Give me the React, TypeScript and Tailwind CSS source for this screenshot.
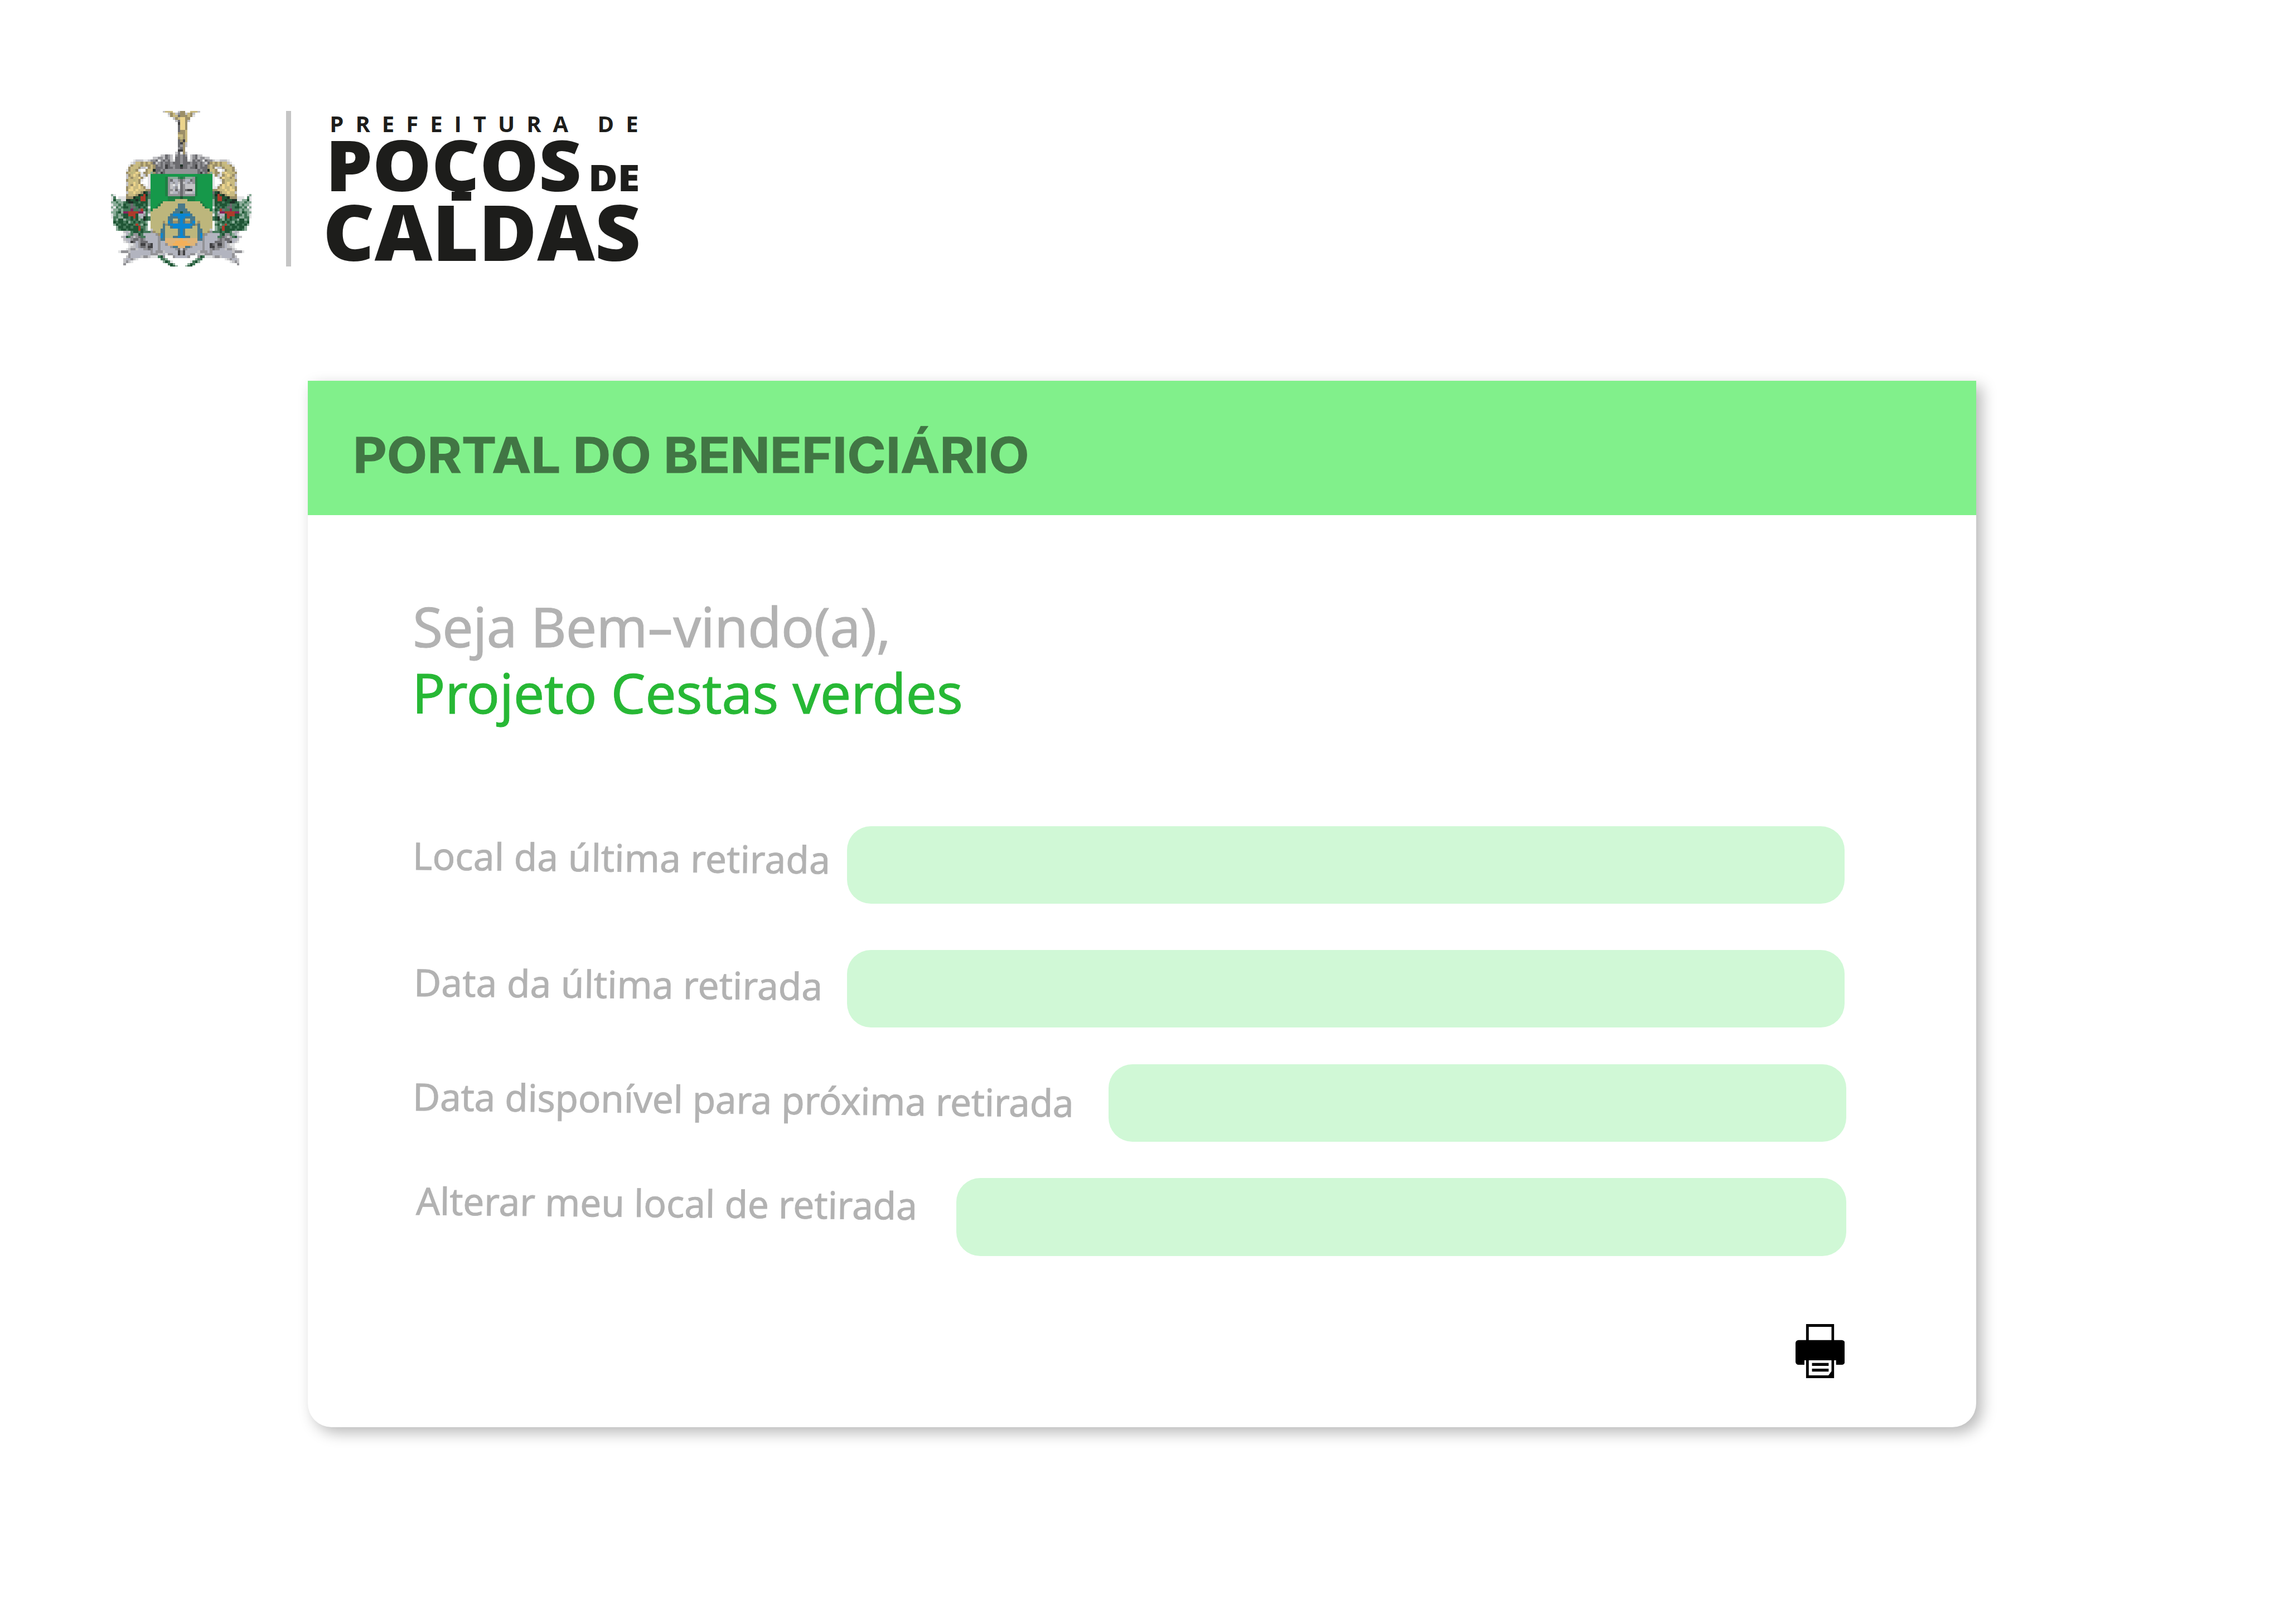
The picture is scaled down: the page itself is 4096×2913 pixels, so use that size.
const PALETTE: Record<string, string> = {
  G: "#16984a", g: "#1f7f44", K: "#bdb67c", B: "#0a86d2", b: "#48788a",
  t: "#c9ba80", T: "#9c8f68", Y: "#ecd48c", D: "#414143", d: "#6c6c70",
  s: "#939397", l: "#c3c3c6", v: "#b2b4bf", x: "#e2e3e4",
  F: "#1f5535", f: "#45795a", m: "#8aac98", n: "#1d3026",
  R: "#ad3b2b", P: "#84265c", O: "#f3b05a", o: "#dfb478",
};

// Left part of the symmetric crest, one character per cell; the right part mirrors it.
const CREST = [
  ".....................lttt..lTT",
  ".......................lTtlsTT",
  ".......................xTttdTTT",
  ".........................lTtYYTT",
  "..........................ldYYTl",
  "...........................DYYT",
  "...........................dYYT",
  "...........................dYYT",
  "...........................dTTt",
  "...........................TTTt",
  "...........................ttTt",
  "...........................TKTt",
  "...........................dTDt",
  "...........................dDTl",
  "...........................dsTl",
  "...........................sdT.",
  "...........................DDT.",
  "..........................ldxTl",
  "....................lldsl.sds",
  ".................llssldsl.dds",
  ".........xlllxxlssdxsdsdlxdds",
  "........xlttTtTtTdlsdsddsddds",
  ".......xTttKTtTTtTdsdsDdssddn",
  ".......TtttTllxTtTdddsDddsddD",
  "......xTtKTx..TttnddsdsssssSs".replace("S", "s"),
  "......TtKtYtxTTtmTdsDdsssssss",
  "......lTtYtTxlTxGGGGGGGGGGGGG",
  "......ltTttYTx.xGGGGGGgsmmmfg",
  "......TttKtTx..xGGGGGGgsdvvsd",
  "......lttYtT...xGGGGGGgsvsvld",
  "......ltTYtYTx.xGGGGGGgslxvxdsllll",
  "......TtYttYtTxxGGGGGGgslvsxdsllll",
  "......TYYtYtttTTGGGGGGgssldvdsdDDl",
  "......lttYttTnFdGGGGGGgslvvsdslllv",
  "mx....TtttTnFRnfGGGGGGgsssssd",
  "xf.xxxTTTnFFRRFfGGGGGGGgggggF",
  "xFmmxxnnFFnFRRFmGGGGGGGgggKKK",
  "mmfmmfFnnFFfFFFmGGGGgKKKKKKKK",
  "xmmfmFffdfFFFfFmGGGgKKKKKKKbb",
  "mxfmfFFfddfFfFfxGGgKKKKKKKKbb",
  "xmmfmfffPffdRfFmgKKKKKKKKKbbb",
  "mmfFmPPRRRRPPvfmKKKKKKKKKbbbF",
  "xmfmfFFRRRFvvsfxKKKKKKKKbBBBB",
  "xffmmFFfFRFmvnFfKKKKKKKbbbbBB",
  ".fmFFmffFfFmfnFfKKKKKKKbbKKbB",
  ".FfFFfFmfFfFffm.KKKKKTKBbTTbB",
  ".mFfFFfFFfRfmFf.KKKKKbTbBBBBB",
  "..mFFfFFfFFRffm.KKKKKbKKbBBBB",
  "..mfFFfFFFFRFfm.lKKKbbKKKKKbB",
  ".....lvlfFFfFfffsTKKbbKKKKKbB",
  ".....xvmfssFfvvvvvsTBbKKKKKbB",
  "....lvFfslsdffvvvvvsBbKKKbbBB",
  ".....lvvsddsdsvvvvvsbbooooooO",
  ".....xlvDdvsdddvvvvsvvooooOOO",
  ".......xxlvsDDsdDvvsvvsooOOOO",
  ".......xllvsddsDDvvsvvvvsbboo",
  "......xlsslvvssdsvvsvvvvvvsdl",
  "...xssslvvvvvvvvsvssslvvvvvDs",
  ".......svvvvvvvvsssllvxssvvDs",
  "......lsvvvvlsslxxxfFs...svvv",
  ".....lvvslx.........ffm......",
  ".....lslx............mFfx....",
  ".....s.................fFm...",
  "........................FFm..",
];

function Crest() {
  return (
    <svg className="h-[279.2px] w-[252.6px] shrink-0" viewBox="0 0.43 57 63.05" preserveAspectRatio="none" shapeRendering="crispEdges">
      {CREST.flatMap((row, y) =>
        Array.from({ length: 57 }, (_, x) => {
          const fill = PALETTE[row[x] ?? row[56 - x]];
          return fill ? <rect key={`${x}-${y}`} x={x} y={y} width={1} height={1} fill={fill} /> : null;
        }),
      )}
    </svg>
  );
}

function Brand() {
  return (
    <div className="flex h-[279.2px] items-start">
      <Crest />
      <div className="ml-[62px] h-full w-[9px] bg-[#c5c5c5]" />
      <div className="ml-[55px] flex flex-col whitespace-nowrap font-['Open_Sans',sans-serif] text-[#1d1d1b]">
        <div className="ml-[14px] text-[40px] leading-[45.6px] font-bold tracking-[21px]">PREFEITURA DE</div>
        <div className="relative ml-[6.5px]">
          <div className="flex items-baseline text-[126px] leading-[100.8px] font-extrabold [clip-path:inset(-10px_-10px_0_-10px)]">
            <span className="w-[471px] origin-left scale-x-[1.055]">POÇOS</span>
            <span className="origin-left scale-x-[1.09] text-[66px] leading-[60px]">DE</span>
          </div>
          <span className="absolute top-[99.5px] left-[226.5px] h-[16px] w-[35px] bg-[#1d1d1b]" />
        </div>
        <div className="ml-[2px] origin-left scale-x-[1.027] text-[139px] leading-[134.9px] font-extrabold">CALDAS</div>
      </div>
    </div>
  );
}

function PrinterIcon() {
  return (
    <svg className="h-[97px] w-[88.4px]" viewBox="0 0 129.5 142">
      <path
        fillRule="evenodd"
        d="M27.7 0H101.3V42H121.5a8 8 0 0 1 8 8V99a8 8 0 0 1-8 8H106.5V95H101.3V142H27.7V95H23.3V107H8a8 8 0 0 1-8-8V50a8 8 0 0 1 8-8H27.7ZM34.8 7.3V42H94.5V7.3ZM34.8 95V134.7H86.5L94.5 123.7V95Z"
      />
      <path d="M43.3 102.3H87v7.7H43.3ZM43.3 117.3H87v7.7H43.3Z" />
    </svg>
  );
}

const FIELDS = [
  {
    text: "Local da última retirada",
    row: "mt-[179px] pr-[3px]",
    label: "ml-[0.6px] leading-[104.8px] tracking-[-0.05px]",
    box: "w-[1788.8px]",
  },
  {
    text: "Data da última retirada",
    row: "mt-[82.8px] pr-[3px]",
    label: "ml-[3.3px] leading-[115px] tracking-[-0.1px]",
    box: "w-[1788.8px]",
  },
  {
    text: "Data disponível para próxima retirada",
    row: "mt-[65.7px]",
    label: "ml-[0.8px] leading-[115px] tracking-[-0.42px]",
    box: "w-[1322.8px]",
  },
  {
    text: "Alterar meu local de retirada",
    row: "mt-[65.7px]",
    label: "ml-[6.6px] leading-[81px] tracking-[-0.27px]",
    box: "w-[1595.8px]",
  },
];

export default function App() {
  return (
    <div className="flex h-[2913px] w-[4096px] flex-col overflow-hidden bg-white pt-[198.7px] font-['Noto_Sans',sans-serif]">
      <header className="pl-[198.7px]">
        <Brand />
      </header>
      <main className="mt-[204.8px] ml-[551.6px] flex h-[1877.5px] w-[2992.4px] flex-col rounded-b-[43px] bg-white shadow-[10px_10px_27px_rgba(0,0,0,0.28)]">
        <div className="flex h-[241.6px] shrink-0 items-center bg-[#81f08b] pt-[24.4px] pl-[81.8px]">
          <h1 className="origin-left scale-x-[1.067] font-['Inter',sans-serif] text-[88px] leading-none font-bold whitespace-nowrap text-[#417644] [-webkit-text-stroke:1px_#417644]">
            PORTAL DO BENEFICIÁRIO
          </h1>
        </div>
        <div className="flex flex-col pt-[139.7px] pr-[233px] pl-[187.4px] whitespace-nowrap">
          <div className="text-[98.5px] leading-[119.5px]">
            <p className="ml-[1px] tracking-[-0.85px] text-[#b2b2b2] [-webkit-text-stroke:0.9px_#b2b2b2]">
              Seja Bem<span className="mr-[8.4px] ml-[7.3px] inline-block scale-x-[1.55]">-</span>vindo(a),
            </p>
            <p className="tracking-[-0.4px] text-[#27b835] [-webkit-text-stroke:0.9px_#27b835]">Projeto Cestas verdes</p>
          </div>
          {FIELDS.map((f) => (
            <div key={f.text} className={`flex h-[139.1px] items-start justify-between ${f.row}`}>
              <label className={`origin-left rotate-[0.56deg] text-[67.7px] text-[#b2b2b2] [-webkit-text-stroke:0.8px_#b2b2b2] ${f.label}`}>
                {f.text}
              </label>
              <div className={`h-[139.1px] shrink-0 rounded-[43px] bg-[#d0f8d6] ${f.box}`} />
            </div>
          ))}
          <button className="mt-[122px] mr-[2.8px] self-end" aria-label="Imprimir">
            <PrinterIcon />
          </button>
        </div>
      </main>
    </div>
  );
}
